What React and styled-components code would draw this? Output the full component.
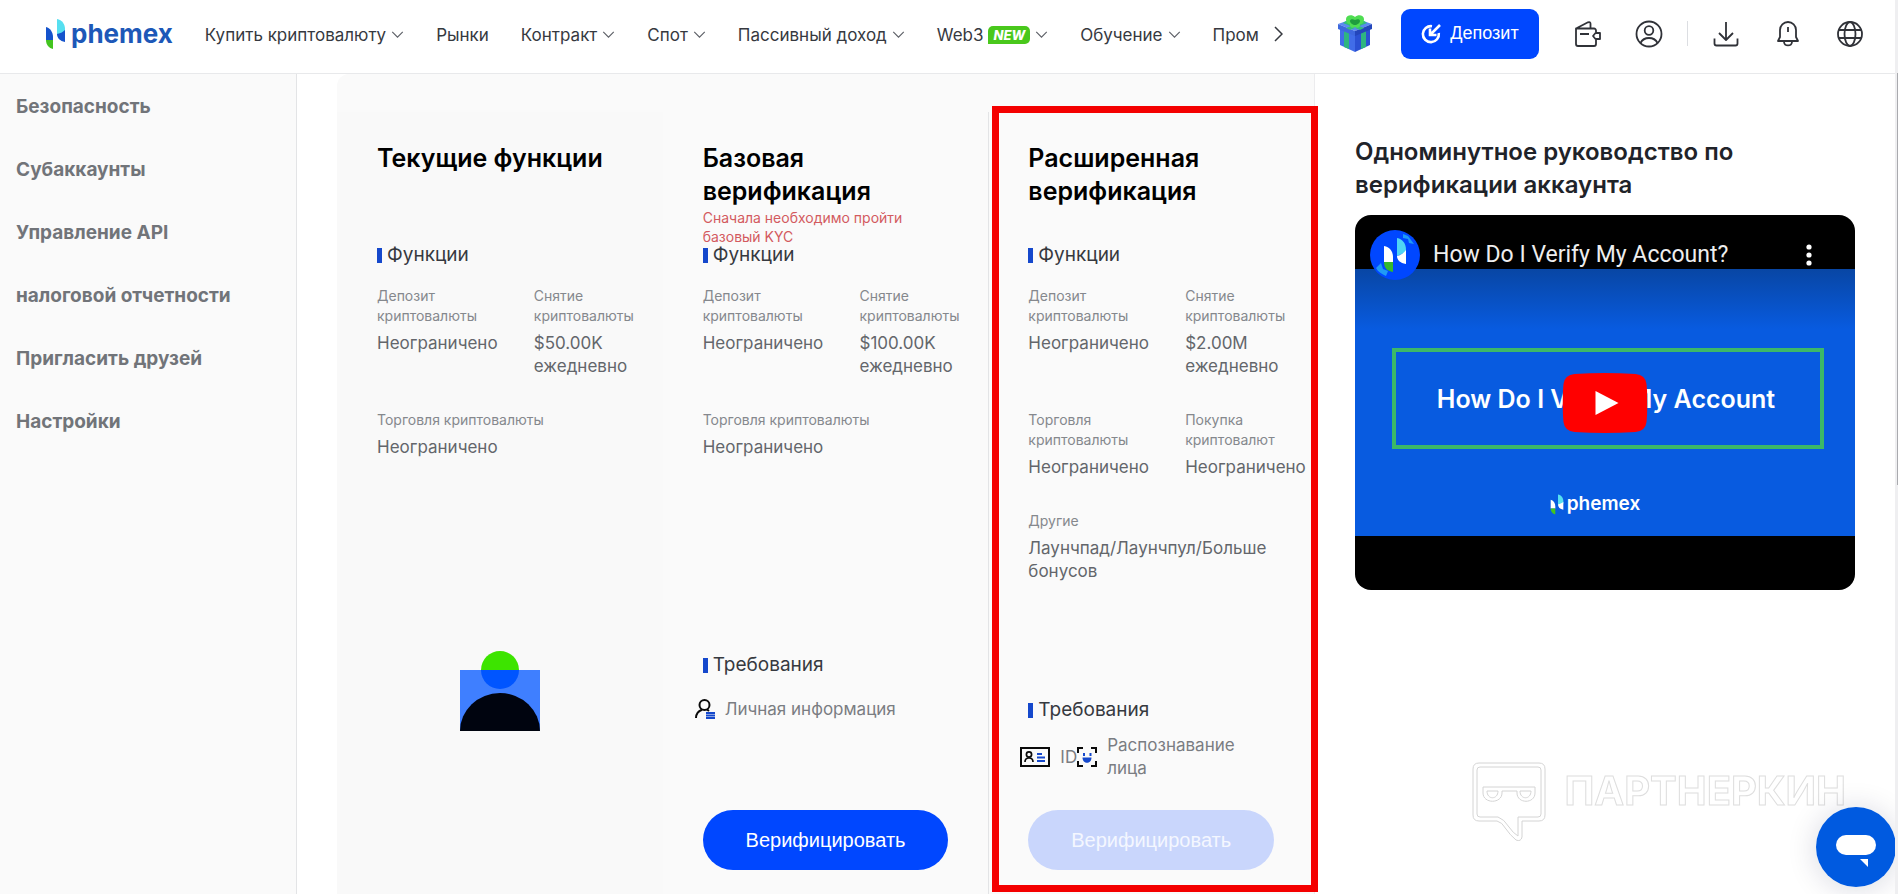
import React from 'react'
import styled, { createGlobalStyle } from 'styled-components'

const GlobalStyle = createGlobalStyle`
  * {
    box-sizing: border-box;
  }

  body {
    margin: 0;
    background: #fff;
    color: #1f2329;
    font-family: Inter, 'Noto Sans', sans-serif;
  }

  h2, h3, h4, p, ul, dl, dd {
    margin: 0;
    padding: 0;
  }

  a {
    color: inherit;
    text-decoration: none;
  }

  button {
    padding: 0;
    border: 0;
    background: none;
    font-family: inherit;
    cursor: pointer;
  }

  svg {
    display: block;
    flex: none;
  }
`

const Page = styled.div`
  display: flex;
  flex-direction: column;
  height: 100vh;
  min-height: 894px;
  overflow: hidden;
`

/* header */

const Header = styled.header`
  display: flex;
  align-items: center;
  height: 74px;
  padding: 0 34px 6px 45px;
  border-bottom: 1px solid #e8e9eb;
`

const LogoLink = styled.a`
  display: flex;
  align-items: center;
  gap: ${(p) => (p.$small ? 3 : 5)}px;
  color: ${(p) => (p.$small ? '#fff' : '#1d58b8')};
  font-size: ${(p) => (p.$small ? 19 : 26)}px;
  font-weight: ${(p) => (p.$small ? 600 : 700)};
  line-height: 30px;
`

const Nav = styled.nav`
  display: flex;
  gap: 32px;
  margin: 2px 0 0 32px;
`

const NavLink = styled.a`
  display: flex;
  align-items: center;
  gap: 5px;
  color: #36393f;
  font-size: 17px;
  line-height: 24px;
  white-space: nowrap;
`

const NewBadge = styled.span`
  padding: 0 5px;
  border-radius: 5px 5px 5px 0;
  background: #49c81c;
  color: #fff;
  font-size: 13px;
  font-style: italic;
  font-weight: 800;
  line-height: 18px;
`

const NextButton = styled.button`
  margin-left: 15px;
`

const Actions = styled.div`
  display: flex;
  align-items: center;
  gap: 34px;
  margin-left: auto;
`

const GiftButton = styled.button`
  margin-right: -5px;
`

const DepositButton = styled.button`
  display: flex;
  align-items: center;
  justify-content: center;
  gap: 9px;
  width: 138px;
  height: 50px;
  border-radius: 9px;
  background: #0047ff;
  color: #fff;
  font-family: 'Liberation Sans', Arial, sans-serif;
  font-size: 18px;
`

const Divider = styled.span`
  width: 1px;
  height: 25px;
  margin: 0 -10px;
  background: #dcdee2;
`

/* page body */

const Body = styled.div`
  display: flex;
  flex: 1;
`

const Sidebar = styled.aside`
  flex: none;
  width: 297px;
  padding: 1px 16px;
  border-right: 1px solid #e3e4e6;
  background: #fafafa;
`

const SideLink = styled.a`
  display: block;
  color: #717479;
  font-size: 19px;
  font-weight: 700;
  line-height: 63px;
  white-space: nowrap;
`

const Levels = styled.main`
  display: flex;
  flex: 1;
  min-width: 0;
  margin-left: 40px;
  padding-top: 38px;
  border-right: 1px solid #ececee;
  border-radius: 12px 0 0 0;
  background: #fafafa;
`

const Level = styled.section`
  position: relative;
  display: flex;
  flex: 1;
  flex-direction: column;
  min-width: 0;
  padding: 30px 0 24px 39px;
  border-left: 1px solid ${(p) => (p.$marked ? '#e3e4e6' : 'transparent')};
  background: ${(p) => (p.$current ? '#f9f9f9' : '#fafafa')};
`

const Marker = styled.span`
  position: absolute;
  inset: -6px -4px 2px 3px;
  border: 7px solid #f40000;
  pointer-events: none;
`

const LevelHead = styled.div`
  height: 101px;
  padding-right: 40px;
`

const LevelTitle = styled.h3`
  color: #000;
  font-size: 25px;
  font-weight: 600;
  line-height: 33px;
`

const Note = styled.p`
  color: #d35a5f;
  font-size: 14px;
  line-height: 19px;
`

const SectionTitle = styled.h4`
  display: flex;
  align-items: center;
  gap: 5px;
  color: #36393f;
  font-size: 19px;
  font-weight: 400;
  line-height: 24px;

  &::before {
    width: 5px;
    height: 15px;
    background: #1548cc;
    content: '';
  }
`

const Features = styled.dl`
  display: grid;
  grid-template-columns: 1fr 1fr;
  gap: 32px 28px;
  margin-top: 19px;
`

const Feature = styled.div`
  grid-column: ${(p) => (p.$wide ? '1 / -1' : 'auto')};
  min-width: 0;

  dt {
    color: #85888d;
    font-size: 14px;
    line-height: 20px;
  }

  dd {
    margin-top: 6px;
    color: #63666b;
    font-size: 17px;
    line-height: 23px;
  }
`

const Portrait = styled.div`
  display: flex;
  justify-content: center;
  margin-top: auto;
  padding: 0 40px 139px 0;
`

const Requirements = styled.div`
  margin-top: auto;
  padding-bottom: ${(p) => p.$space}px;
`

const RequirementList = styled.ul`
  display: flex;
  align-items: center;
  min-height: 40px;
  margin: 12px 40px 0 -8px;
  list-style: none;
`

const Requirement = styled.li`
  display: flex;
  align-items: center;
  gap: 10px;
  color: #7a7d82;
  font-size: 17px;
  line-height: 23px;
`

const VerifyButton = styled.button`
  height: 60px;
  margin-right: 40px;
  border-radius: 30px;
  background: #0047ff;
  color: #fff;
  font-family: 'Liberation Sans', Arial, sans-serif;
  font-size: 20px;

  &:disabled {
    background: #c9d6fc;
    color: #f4f7ff;
    cursor: default;
  }
`

/* guide */

const Guide = styled.section`
  flex: 0 1 583px;
  min-width: 0;
  padding: 61px 43px 0 40px;
`

const GuideTitle = styled.h2`
  max-width: 420px;
  margin-bottom: 14px;
  font-size: 24px;
  font-weight: 600;
  line-height: 33px;
`

const Video = styled.div`
  position: relative;
  padding: 54px 0;
  border-radius: 16px;
  background: #000;
  overflow: hidden;
`

const VideoBar = styled.div`
  position: absolute;
  inset: 15px 42px auto 15px;
  display: flex;
  align-items: center;
  gap: 13px;
  color: #eee;
  font-family: Roboto, sans-serif;
  font-size: 23px;
  line-height: 50px;
`

const MoreButton = styled.button`
  margin-left: auto;
`

const Poster = styled.div`
  display: flex;
  flex-direction: column;
  align-items: center;
  height: 267px;
  padding: 79px 31px 0 37px;
  background: linear-gradient(#0846a4, #085be0 60px);
`

const PosterTitle = styled.div`
  align-self: stretch;
  padding: 34px 4px 32px 0;
  border: 4px solid #3cb868;
  color: #fff;
  font-size: 25px;
  font-weight: 600;
  line-height: 27px;
  text-align: center;
`

const PosterLogo = styled.div`
  margin: 40px 26px 0 0;
`

const PlayButton = styled.button`
  position: absolute;
  top: 50%;
  left: 50%;
  transform: translate(-50%, -50%);
`

/* floating */

const Watermark = styled.div`
  position: fixed;
  right: 52px;
  bottom: 52px;
  display: flex;
  gap: 18px;
  color: transparent;
  font-size: 40px;
  font-weight: 700;
  line-height: 58px;
  -webkit-text-stroke: 1px #dedede;
`

const ChatButton = styled.button`
  position: fixed;
  right: 2px;
  bottom: 7px;
  border-radius: 50%;
  box-shadow: 0 2px 30px rgba(0, 20, 60, 0.16);
`

const ScrollTrack = styled.div`
  position: fixed;
  inset: 0 0 0 auto;
  width: 3px;
  padding: 73px 0 0 2px;
  background: #efeff1;

  &::before {
    display: block;
    height: 412px;
    background: #a9aaae;
    content: '';
  }
`

function PhemexMark({ width = 21, height = 30, light }) {
  return (
    <svg width={width} height={height} viewBox="0 0 21 30">
      <path d="M1 8c4 1 7 5 7 10v3H1z" fill={light ? '#fff' : '#1553cc'} />
      <path d="M1 21h7v9c-4-1-7-4-7-9z" fill="#43c41f" />
      <path d="M12 0c5 1 8 5 8 10v4l-8 2z" fill="#56dff0" />
      <path d="M20 11v12c-5-1-8-4-8-8 4-1 6-2 8-4z" fill={light ? '#fff' : '#1553cc'} />
    </svg>
  )
}

function Logo({ small }) {
  return (
    <LogoLink href="#" $small={small}>
      <PhemexMark width={small ? 14 : 21} height={small ? 21 : 30} light={small} />
      phemex
    </LogoLink>
  )
}

function Chevron() {
  return (
    <svg width="13" height="7" viewBox="0 0 14 8" fill="none" stroke="#5c5f66" strokeWidth="1.3">
      <path d="M1 1l6 6 6-6" />
    </svg>
  )
}

function Icon({ children }) {
  return (
    <svg width="28" height="28" viewBox="0 0 28 28" fill="none" stroke="#303238" strokeWidth="1.8" strokeLinejoin="round">
      {children}
    </svg>
  )
}

function GiftIcon() {
  return (
    <svg width="34" height="37" viewBox="0 0 34 37">
      <path d="M2 12l15 6v19L2 30z" fill="#416de8" />
      <path d="M32 12l-15 6v19l15-7z" fill="#2b51d3" />
      <path d="M6 14l5 2v18l-5-2zM28 14l-5 2v18l5-2z" fill="#2fb580" />
      <path d="M0 9l17-6 17 6-17 7z" fill="#5b8bf0" />
      <path d="M0 9l17 7v5L0 14z" fill="#3d68de" />
      <path d="M34 9l-17 7v5l17-7z" fill="#2446bb" />
      <path d="M8 6l18 7-4 2L5 8zM26 6L8 13l4 2 17-7z" fill="#33bd7c" />
      <path d="M17 2c-3-3-9-2-9 2 0 3 1 5 4 5-1 3 3 5 5 3 2 2 6 0 5-3 3 0 4-2 4-5 0-4-6-5-9-2z" fill="#4fdd52" />
      <path d="M17 5c-2-1-5-1-5 1s3 4 5 4 5-2 5-4-3-2-5-1z" fill="#1f9c3d" />
    </svg>
  )
}

function DepositIcon() {
  return (
    <svg width="20" height="20" viewBox="0 0 20 20" fill="none" stroke="#fff" strokeWidth="2.6">
      <path d="M11 2.200A8 8 0 1 0 17.800 9" />
      <path d="M19 1l-9 9M9 4.500V11h6.500" />
    </svg>
  )
}

function PersonIcon() {
  return (
    <svg width="20" height="20" viewBox="0 0 20 20" fill="none" stroke="#0a0a0a" strokeWidth="2">
      <circle cx="9.500" cy="6" r="5" />
      <path d="M1 19c0-4 2.500-7 6-8.300M12 10.500l2 1.500" />
      <path d="M11 14h9M11 16.500h9M11 19h9" stroke="#1548cc" strokeWidth="1.900" />
    </svg>
  )
}

function IdIcon() {
  return (
    <svg width="30" height="20" viewBox="0 0 30 20" fill="none" stroke="#0a0a0a" strokeWidth="2">
      <path d="M1 1h28v18H1z" />
      <circle cx="9" cy="7.500" r="2.600" strokeWidth="1.700" />
      <path d="M5 15c0-2.500 1.500-4 4-4s4 1.500 4 4" strokeWidth="1.700" />
      <path d="M17 7h5M17 10.500h8M17 14h8" stroke="#1548cc" strokeWidth="1.900" />
    </svg>
  )
}

function FaceIcon() {
  return (
    <svg width="20" height="20" viewBox="0 0 20 20" fill="none" stroke="#0a0a0a" strokeWidth="2">
      <path d="M1 6V1h5M14 1h5v5M19 14v5h-5M6 19H1v-5" />
      <path d="M5.500 10.500h9c0 7-9 7-9 0z" fill="#1548cc" stroke="none" />
      <path d="M6 6h2v3H6zM12.500 6h2v3h-2z" fill="#1548cc" stroke="none" />
    </svg>
  )
}

const navItems = [
  { label: 'Купить криптовалюту', menu: true },
  { label: 'Рынки' },
  { label: 'Контракт', menu: true },
  { label: 'Спот', menu: true },
  { label: 'Пассивный доход', menu: true },
  { label: 'Web3', menu: true, isNew: true },
  { label: 'Обучение', menu: true },
  { label: 'Пром' },
]

const sideItems = [
  'Безопасность',
  'Субаккаунты',
  'Управление API',
  'налоговой отчетности',
  'Пригласить друзей',
  'Настройки',
]

const UNLIMITED = 'Неограничено'

function FeatureItem({ label, wide, children }) {
  return (
    <Feature $wide={wide}>
      <dt>{label}</dt>
      <dd>{children}</dd>
    </Feature>
  )
}

function App() {
  return (
    <Page>
      <GlobalStyle />
      <Header>
        <Logo />
        <Nav>
          {navItems.map((item) => (
            <NavLink key={item.label} href="#">
              {item.label}
              {item.isNew && <NewBadge>NEW</NewBadge>}
              {item.menu && <Chevron />}
            </NavLink>
          ))}
        </Nav>
        <NextButton aria-label="Далее">
          <svg width="9" height="16" viewBox="0 0 9 16" fill="none" stroke="#36393f" strokeWidth="1.5">
            <path d="M1 1l7 7-7 7" />
          </svg>
        </NextButton>
        <Actions>
          <GiftButton aria-label="Бонусы">
            <GiftIcon />
          </GiftButton>
          <DepositButton>
            <DepositIcon />
            Депозит
          </DepositButton>
          <button aria-label="Кошелек">
            <Icon>
              <path d="M23 12v-1.500a2 2 0 0 0-2-2H3V24a2 2 0 0 0 2 2h16a2 2 0 0 0 2-2v-4M3 8.500L15 2.300c1.500-.6 2.500 0 2.500 1.500v4.500M7 14h9" />
              <path d="M27 13h-4.500l-2.500 3 2.500 3H27z" />
            </Icon>
          </button>
          <button aria-label="Профиль">
            <Icon>
              <circle cx="14" cy="14" r="12.500" />
              <circle cx="14" cy="10.500" r="4.300" />
              <path d="M5.500 23c2-4 5-5 8.500-5s6.500 1 8.500 5" />
            </Icon>
          </button>
          <Divider />
          <button aria-label="Загрузить">
            <Icon>
              <path d="M14 2v17M7 13l7 7 7-7M2.500 18.500v5a2 2 0 0 0 2 2h19a2 2 0 0 0 2-2v-5" />
            </Icon>
          </button>
          <button aria-label="Уведомления">
            <Icon>
              <path d="M4 21l2-4V10a8 8 0 0 1 16 0v7l2 4zM14 7v5M10 22c.5 4.500 7.500 4.500 8 0" />
            </Icon>
          </button>
          <button aria-label="Язык">
            <Icon>
              <circle cx="14" cy="14" r="12" />
              <ellipse cx="14" cy="14" rx="5.500" ry="12" />
              <path d="M3 10h22M3 18h22" />
            </Icon>
          </button>
        </Actions>
      </Header>

      <Body>
        <Sidebar>
          {sideItems.map((item) => (
            <SideLink key={item} href="#">
              {item}
            </SideLink>
          ))}
        </Sidebar>

        <Levels>
          <Level $current>
            <LevelHead>
              <LevelTitle>Текущие функции</LevelTitle>
            </LevelHead>
            <SectionTitle>Функции</SectionTitle>
            <Features>
              <FeatureItem label="Депозит криптовалюты">{UNLIMITED}</FeatureItem>
              <FeatureItem label="Снятие криптовалюты">$50.00K ежедневно</FeatureItem>
              <FeatureItem label="Торговля криптовалюты" wide>
                {UNLIMITED}
              </FeatureItem>
            </Features>
            <Portrait>
              <svg width="80" height="80" viewBox="0 0 80 80">
                <circle cx="40" cy="19" r="19" fill="#3de400" />
                <path d="M0 19h80v61H0z" fill="#3f7fff" />
                <path d="M21 19h38a19 19 0 0 1-38 0z" fill="#0055ff" />
                <path d="M0 80a40 38 0 0 1 80 0z" fill="#00040f" />
              </svg>
            </Portrait>
          </Level>

          <Level>
            <LevelHead>
              <LevelTitle>Базовая верификация</LevelTitle>
              <Note>Сначала необходимо пройти базовый KYC</Note>
            </LevelHead>
            <SectionTitle>Функции</SectionTitle>
            <Features>
              <FeatureItem label="Депозит криптовалюты">{UNLIMITED}</FeatureItem>
              <FeatureItem label="Снятие криптовалюты">$100.00K ежедневно</FeatureItem>
              <FeatureItem label="Торговля криптовалюты" wide>
                {UNLIMITED}
              </FeatureItem>
            </Features>
            <Requirements $space={81}>
              <SectionTitle>Требования</SectionTitle>
              <RequirementList>
                <Requirement>
                  <PersonIcon />
                  Личная информация
                </Requirement>
              </RequirementList>
            </Requirements>
            <VerifyButton>Верифицировать</VerifyButton>
          </Level>

          <Level $marked>
            <Marker />
            <LevelHead>
              <LevelTitle>Расширенная верификация</LevelTitle>
            </LevelHead>
            <SectionTitle>Функции</SectionTitle>
            <Features>
              <FeatureItem label="Депозит криптовалюты">{UNLIMITED}</FeatureItem>
              <FeatureItem label="Снятие криптовалюты">$2.00M ежедневно</FeatureItem>
              <FeatureItem label="Торговля криптовалюты">{UNLIMITED}</FeatureItem>
              <FeatureItem label="Покупка криптовалют">{UNLIMITED}</FeatureItem>
              <FeatureItem label="Другие" wide>
                Лаунчпад/Лаунчпул/Больше бонусов
              </FeatureItem>
            </Features>
            <Requirements $space={30}>
              <SectionTitle>Требования</SectionTitle>
              <RequirementList>
                <Requirement>
                  <IdIcon />
                  ID
                </Requirement>
                <Requirement>
                  <FaceIcon />
                  Распознавание лица
                </Requirement>
              </RequirementList>
            </Requirements>
            <VerifyButton disabled>Верифицировать</VerifyButton>
          </Level>
        </Levels>

        <Guide>
          <GuideTitle>Одноминутное руководство по верификации аккаунта</GuideTitle>
          <Video>
            <Poster>
              <PosterTitle>How Do I Verify My Account</PosterTitle>
              <PosterLogo>
                <Logo small />
              </PosterLogo>
            </Poster>
            <VideoBar>
              <svg width="50" height="50" viewBox="0 0 50 50">
                <circle cx="25" cy="25" r="25" fill="#0047ff" />
                <path d="M33 4l5 2 6 8-5-1-1-4-5-1zM6 38l5-5 2 6 5 2-2 5c-4-2-8-4-10-8z" fill="#1f9bf5" />
                <path d="M14 16c6 1 9 6 9 11v5h-9z" fill="#fff" />
                <path d="M14 32h9v10c-6-1-9-4-9-10z" fill="#35b82c" />
                <path d="M27 8c6 1 9 6 9 12v2l-9 4z" fill="#4fd4f4" />
                <path d="M36 20v14c-6-1-9-4-9-8 4-1 7-3 9-6z" fill="#fff" />
              </svg>
              How Do I Verify My Account?
              <MoreButton aria-label="Ещё">
                <svg width="8" height="22" viewBox="0 0 8 22" fill="#fff">
                  <circle cx="4" cy="3" r="2.600" />
                  <circle cx="4" cy="11" r="2.600" />
                  <circle cx="4" cy="19" r="2.600" />
                </svg>
              </MoreButton>
            </VideoBar>
            <PlayButton aria-label="Смотреть">
              <svg width="85" height="60" viewBox="0 0 85 60">
                <path d="M12 1Q42-1 73 1 83 2 84 11q2 19 0 38-1 9-11 10-31 2-61 0Q2 58 1 49-1 30 1 11 2 2 12 1z" fill="#f00" />
                <path d="M33 18l23 12-23 12z" fill="#fff" />
              </svg>
            </PlayButton>
          </Video>
        </Guide>
      </Body>

      <Watermark>
        <svg width="74" height="80" viewBox="0 0 74 80" fill="none" stroke="#d4d4d4">
          <path d="M7 1h60q6 0 6 6v46q0 6-6 6H50v16q-1 5-6 3-6-5-10-11-4-7-9-8H7q-6 0-6-6V7q0-6 6-6z" />
          <path d="M8 5h58q3 0 3 3v44q0 3-3 3H46v19q-5-3-9-9-5-8-11-10H8q-3 0-3-3V8q0-3 3-3z" />
          <path d="M11 25h52v6c0 11-18 11-18 0v-2H30v2c0 11-19 11-19 0z" />
          <path d="M15 29h11c0 9-11 9-11 0zM48 29h11c0 9-11 9-11 0z" />
        </svg>
        ПАРТНЕРКИН
      </Watermark>
      <ChatButton aria-label="Чат">
        <svg width="80" height="80" viewBox="0 0 80 80">
          <circle cx="40" cy="40" r="40" fill="#005ae0" />
          <rect x="20" y="28" width="40" height="20" rx="10" fill="#fff" />
          <path d="M44 52h8v8z" fill="#fff" />
        </svg>
      </ChatButton>
      <ScrollTrack />
    </Page>
  )
}

export default App
